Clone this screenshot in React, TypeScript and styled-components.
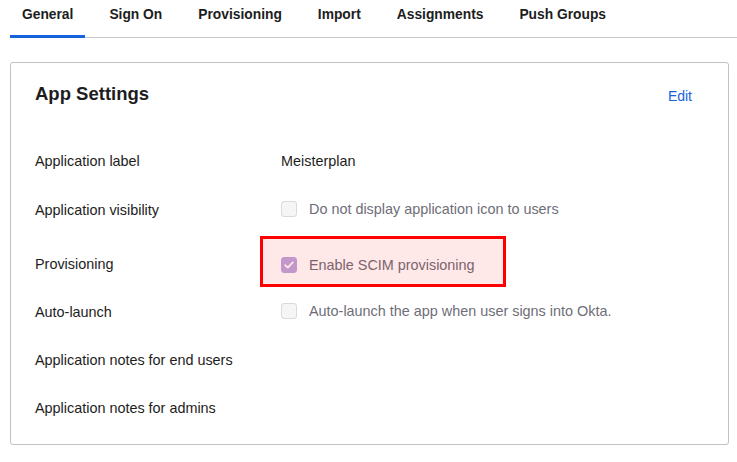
import React from "react";
import styled, { createGlobalStyle } from "styled-components";

const Global = createGlobalStyle`
  html, body { margin: 0; padding: 0; background: #ffffff; }
  body { font-family: "Liberation Sans", Arial, sans-serif; color: #1d1d21; }
  *, *::before, *::after { box-sizing: border-box; }
`;

const Page = styled.div`
  width: 737px;
  height: 462px;
  overflow: hidden;
`;

const TabBar = styled.nav`
  display: flex;
  gap: 12px;
  margin-left: 10px;
  border-bottom: 1px solid #c8c8cc;
`;

const Tab = styled.div<{ $active?: boolean }>`
  padding: 6px 12px 11px;
  line-height: 18px;
  font-size: 13.8px;
  font-weight: 700;
  color: #1d1d21;
  margin-bottom: -1px;
  border-bottom: 3px solid ${(p) => (p.$active ? "#1662dd" : "transparent")};
`;

const Card = styled.section`
  margin: 24px 8px 0 10px;
  border: 1px solid #c1c1c8;
  border-radius: 3px;
  padding: 19px 36px 12px 24px;
`;

const Header = styled.header`
  display: flex;
  justify-content: space-between;
  align-items: center;
  margin-bottom: 30px;
`;

const Title = styled.h2`
  margin: 0;
  font-size: 18.5px;
  line-height: 24px;
  font-weight: 700;
  color: #1d1d21;
`;

const EditLink = styled.a`
  font-size: 14px;
  color: #1662dd;
  text-decoration: none;
  margin-top: 4px;
`;

const Row = styled.div<{ $extraTop?: number; $height?: number }>`
  display: grid;
  grid-template-columns: 246px 1fr;
  align-items: center;
  min-height: ${(p) => (p.$height ?? 48) + (p.$extraTop ?? 0)}px;
  padding-top: ${(p) => p.$extraTop ?? 0}px;
  font-size: 14.4px;
  line-height: 18px;
`;

const Label = styled.div`
  color: #1d1d21;
`;

const Value = styled.div`
  color: #1d1d21;
`;

const CheckField = styled.label<{ $highlight?: boolean }>`
  position: relative;
  display: inline-flex;
  align-items: center;
  gap: 12px;
  color: #6e6e78;
  &::after {
    content: "";
    box-sizing: border-box;
    display: ${(p) => (p.$highlight ? "block" : "none")};
    position: absolute;
    left: -21px;
    top: -20px;
    width: 246px;
    height: 51px;
    border: 3px solid #ff0000;
    background: rgba(255, 0, 0, 0.09);
    pointer-events: none;
  }
`;

const Box = styled.span<{ $checked?: boolean }>`
  width: 16px;
  height: 16px;
  border-radius: 3px;
  display: inline-flex;
  align-items: center;
  justify-content: center;
  background: ${(p) => (p.$checked ? "#bea6e0" : "#f5f5f6")};
  border: 1px solid ${(p) => (p.$checked ? "#bea6e0" : "#d9d9de")};
  flex: none;
`;

function Check({ checked, highlight, children }: { checked?: boolean; highlight?: boolean; children: React.ReactNode }) {
  return (
    <CheckField $highlight={highlight}>
      <Box $checked={checked}>
        {checked && (
          <svg width="10" height="8" viewBox="0 0 10 8" fill="none">
            <path d="M1.2 4.2 L3.8 6.6 L8.8 1.4" stroke="#ffffff" strokeWidth="1.8" strokeLinecap="round" strokeLinejoin="round" />
          </svg>
        )}
      </Box>
      {children}
    </CheckField>
  );
}

export default function App() {
  const tabs = ["General", "Sign On", "Provisioning", "Import", "Assignments", "Push Groups"];
  return (
    <Page>
      <Global />
      <TabBar>
        {tabs.map((t, i) => (
          <Tab key={t} $active={i === 0}>{t}</Tab>
        ))}
      </TabBar>
      <Card>
        <Header>
          <Title>App Settings</Title>
          <EditLink href="#">Edit</EditLink>
        </Header>
        <Row $height={50}>
          <Label>Application label</Label>
          <Value>Meisterplan</Value>
        </Row>
        <Row>
          <Label>Application visibility</Label>
          <Value><Check>Do not display application icon to users</Check></Value>
        </Row>
        <Row $extraTop={6}>
          <Label>Provisioning</Label>
          <Value><Check checked highlight>Enable SCIM provisioning</Check></Value>
        </Row>
        <Row>
          <Label>Auto-launch</Label>
          <Value><Check>Auto-launch the app when user signs into Okta.</Check></Value>
        </Row>
        <Row>
          <Label>Application notes for end users</Label>
          <Value />
        </Row>
        <Row>
          <Label>Application notes for admins</Label>
          <Value />
        </Row>
      </Card>
    </Page>
  );
}
